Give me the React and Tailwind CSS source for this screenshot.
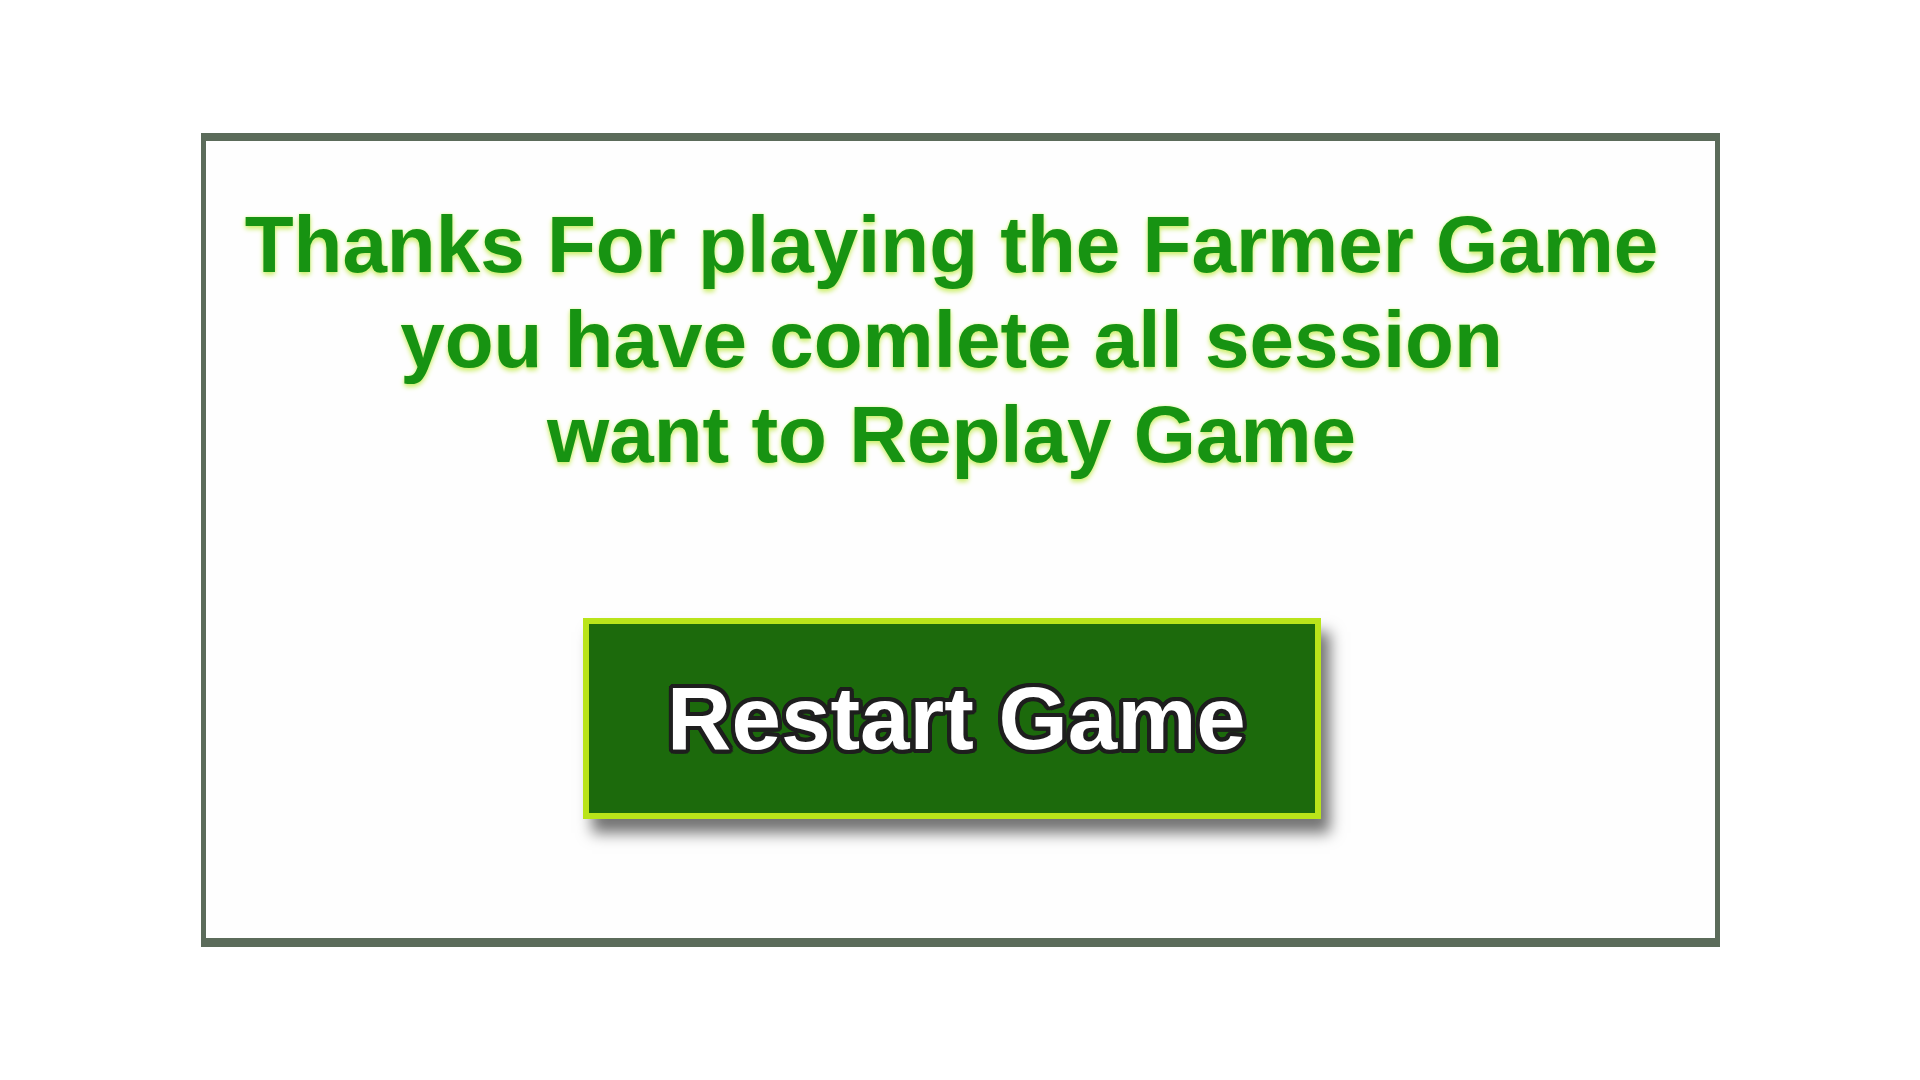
export default function App() {
  return (
    <div className="w-full h-screen bg-white flex items-center justify-center">
      <div className="w-[1519px] h-[814px] bg-[#fefefe] border-[#5b6b5a] border-t-[8px] border-b-[9px] border-x-[5px] flex flex-col items-center pt-[56px] pr-[17px]">
        <div
          className="text-center font-bold text-[80px] leading-[95px] text-[#179312] [text-shadow:0_3px_5px_#cdee6e,0_0_3px_#e2f7a6]"
          style={{ fontFamily: '"Liberation Sans", Arial, sans-serif' }}
        >
          <div>Thanks For playing the Farmer Game</div>
          <div>you have comlete all session</div>
          <div>want to Replay Game</div>
        </div>
        <button
          className="mt-[136px] w-[738px] h-[201px] bg-[#1c6a0c] border-[6px] border-[#b9e41a] shadow-[9px_14px_14px_rgba(0,0,0,0.55)] flex items-center justify-center pl-[10px]"
          style={{ fontFamily: '"Liberation Sans", Arial, sans-serif' }}
        >
          <span className="text-white font-bold text-[89px] leading-none [text-shadow:4px_0_0_#1e1e1e,-4px_0_0_#1e1e1e,0_4px_0_#1e1e1e,0_-4px_0_#1e1e1e,3px_3px_0_#1e1e1e,-3px_3px_0_#1e1e1e,3px_-3px_0_#1e1e1e,-3px_-3px_0_#1e1e1e,2px_4px_0_#1e1e1e,-2px_4px_0_#1e1e1e,2px_-4px_0_#1e1e1e,-2px_-4px_0_#1e1e1e,4px_2px_0_#1e1e1e,-4px_2px_0_#1e1e1e,4px_-2px_0_#1e1e1e,-4px_-2px_0_#1e1e1e]">
            Restart Game
          </span>
        </button>
      </div>
    </div>
  );
}
